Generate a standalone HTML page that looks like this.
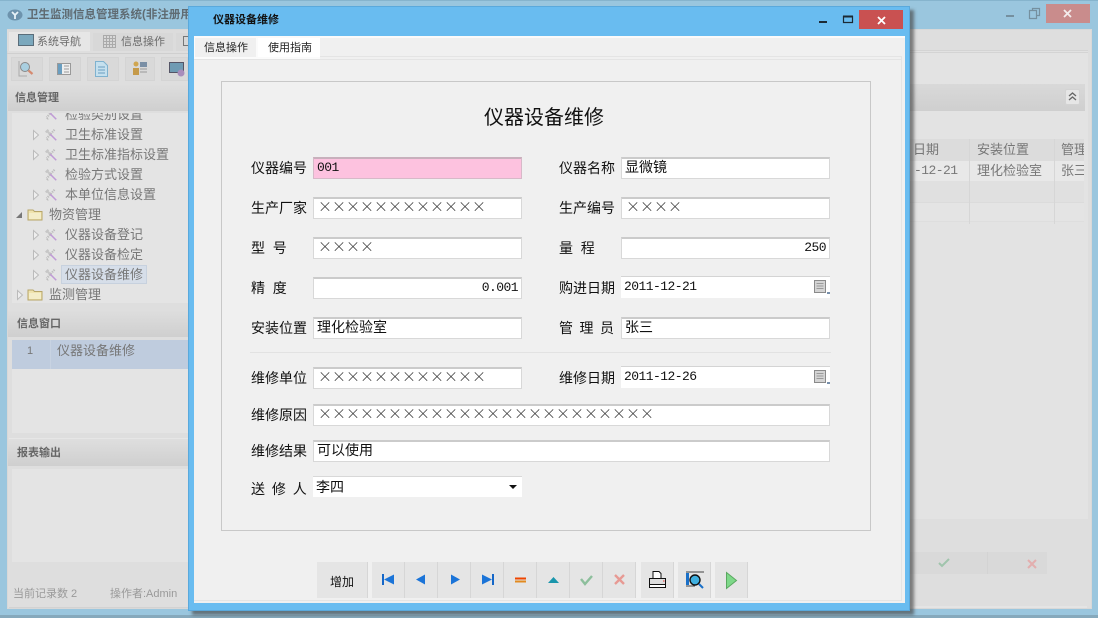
<!DOCTYPE html>
<html lang="zh-CN"><head><meta charset="utf-8">
<style>
html,body{margin:0;padding:0}
body{width:1098px;height:618px;overflow:hidden;position:relative;background:#9ac6de;font-family:"Liberation Sans","WenQuanYi Zen Hei","Noto Sans CJK SC",sans-serif;color:#000}
div,span,svg{position:absolute;display:block;box-sizing:border-box}
svg{overflow:visible}
.t{white-space:nowrap;line-height:20px}
.g{color:#777;font-size:13px}
.h{background:linear-gradient(#dedede,#cfcfcf);color:#666;font-weight:bold;font-size:11px;line-height:28px;padding-left:4px}
.tb{background:#d9d9d9;border:1px solid #d4d4d4;width:32px;height:24px;top:57px}
.l{font-size:14px;line-height:20px;white-space:pre;color:#111}
.i{background:#fff;border:1px solid #d8d8d8;border-top:2px solid #cbcbcb;height:22px;font-size:14px;line-height:17px;padding-left:3px;white-space:pre;color:#111}
.m{font-family:"Liberation Mono",monospace;font-size:13px;letter-spacing:-.55px;line-height:17px}
.x{font-family:"Noto Sans CJK SC",sans-serif;font-size:14px;font-weight:300;letter-spacing:0;color:#222;padding-left:4px;line-height:17px;overflow:hidden}
.b{background:#e5e5e5;border-right:1px solid #d6d6d6;top:562px;height:36px;width:33px}
.b svg{left:0;top:3px}
</style></head><body>
<svg width="0" height="0" style="left:0;top:0"><defs>
<symbol id="tool" viewBox="0 0 16 16"><path d="M3 3l4 4M5 2L2 5" stroke="#c6c6c6" stroke-width="2.400" fill="none"/><path d="M12 2L3 12" stroke="#bdbdbd" stroke-width="2.400" stroke-dasharray="1.500 1"/><path d="M7 7l7 7" stroke="#c09bd6" stroke-width="1.800"/><path d="M3 13l2 1" stroke="#aaa"/></symbol>
<symbol id="folder" viewBox="0 0 16 14"><path d="M1 3h5l1.500 1.500H15V13H1z" fill="#efe3ae" stroke="#b7a669"/><path d="M2 6h12v6H2z" fill="#f4edc8"/></symbol>
</defs></svg>

<!-- back window -->
<div style="left:0;top:0;width:1098px;height:1px;background:#86b4cd"></div>
<div style="left:0;top:615px;width:1098px;height:3px;background:#86a9bc"></div>
<svg width="16" height="12" style="left:7px;top:9px"><ellipse cx="8" cy="6" rx="7.500" ry="5.500" fill="#6d93ad"/><path d="M5 3l3 3 3-3M8 6v4" stroke="#e8f2f8" stroke-width="1.800" fill="none"/></svg>
<div class="t" style="left:27px;top:5px;font-size:11.500px;font-weight:bold;color:#5f6b72">卫生监测信息管理系统(非注册用户)</div>
<svg width="100" height="20" style="left:1000px;top:6px"><path d="M6 10h8" stroke="#75909f" stroke-width="2"/><path d="M29.500 4.500h7v8h-7zM32.500 4.500V2.500h7v7h-3" fill="none" stroke="#75909f" stroke-width="1.200"/></svg>
<div style="left:1046px;top:4px;width:44px;height:19px;background:#c98c8c"></div>
<svg width="10" height="10" style="left:1063px;top:9px"><path d="M1 1l7 7M8 1L1 8" stroke="#f4ecec" stroke-width="1.800"/></svg>

<div style="left:7px;top:29px;width:1085px;height:580px;background:#dedede;border:1px solid #d8d8d8"></div>
<div style="left:7px;top:30px;width:181px;height:21px;background:#dcdcdc"></div>
<div style="left:9px;top:32px;width:81px;height:19px;background:#e6e6e6"></div>
<div style="left:93px;top:33px;width:80px;height:18px;background:#d8d8d8"></div>
<svg width="16" height="13" style="left:18px;top:34px"><rect x=".5" y=".5" width="15" height="11" fill="#7ba8bd" stroke="#5a6d7a"/></svg>
<div class="t" style="left:37px;top:32px;font-size:11px;color:#6b6b6b">系统导航</div>
<div style="left:103px;top:35px;width:13px;height:13px;background:repeating-linear-gradient(90deg,#aaa 0 1px,transparent 1px 3px),repeating-linear-gradient(#aaa 0 1px,transparent 1px 3px)"></div>
<div class="t" style="left:121px;top:32px;font-size:11px;color:#6b6b6b">信息操作</div>
<div style="left:176px;top:33px;width:12px;height:18px;background:#d8d8d8"></div>
<div style="left:183px;top:36px;width:5px;height:10px;border:1px solid #777;border-right:0"></div>
<div style="left:7px;top:53px;width:181px;height:1px;background:#cfcfcf"></div>

<div class="tb" style="left:11px"></div><div class="tb" style="left:49px"></div><div class="tb" style="left:87px"></div><div class="tb" style="left:125px;width:30px"></div><div class="tb" style="left:161px;width:27px"></div>
<svg width="16" height="18" style="left:18px;top:60px"><circle cx="7" cy="7" r="4.500" fill="#a9cfe0" stroke="#888"/><path d="M10.500 10.500l4 3.500" stroke="#d58a70" stroke-width="2.200"/><path d="M1 1v15h8" stroke="#aaa" fill="none"/></svg>
<svg width="14" height="12" style="left:57px;top:63px"><rect x=".5" y=".5" width="13" height="11" fill="#eee" stroke="#999"/><rect x="1" y="1" width="4" height="10" fill="#6a9ec0"/><path d="M7 3h5M7 6h5M7 9h5" stroke="#999"/></svg>
<svg width="13" height="16" style="left:95px;top:61px"><path d="M.5.5h8l4 4v11H.5z" fill="#c5e0ee" stroke="#7fb2cf"/><path d="M3 6h7M3 9h7M3 12h7" stroke="#6a9ec0"/></svg>
<svg width="16" height="16" style="left:132px;top:60px"><circle cx="4" cy="4" r="2.500" fill="#d0a650"/><path d="M1 8h6v7H1z" fill="#c59a4a"/><rect x="8" y="2" width="7" height="5" fill="#7a8fa5"/><path d="M8 9h7M8 12h7" stroke="#999"/></svg>
<svg width="16" height="15" style="left:169px;top:62px"><rect x=".5" y=".5" width="14" height="10" fill="#6f9bb3" stroke="#556"/><circle cx="12" cy="11" r="3.500" fill="#a88dbb"/></svg>

<div class="h" style="left:8px;top:84px;width:180px;padding-left:7px;height:27px">信息管理</div>
<div style="left:12px;top:113px;width:176px;height:190px;background:#e4e4e4;overflow:hidden"><div style="left:0;top:-2px;width:176px;height:192px">
<div class="t g" style="left:53px;top:-6px">检验类别设置</div><svg width="14" height="14" style="left:32px;top:-4px"><use href="#tool"/></svg>
<svg width="6" height="10" style="left:21px;top:19px"><path d="M.5.5l5 4.500-5 4.500z" fill="#eee" stroke="#bbb"/></svg><svg width="14" height="14" style="left:32px;top:17px"><use href="#tool"/></svg><div class="t g" style="left:53px;top:14px">卫生标准设置</div>
<svg width="6" height="10" style="left:21px;top:39px"><path d="M.5.5l5 4.500-5 4.500z" fill="#eee" stroke="#bbb"/></svg><svg width="14" height="14" style="left:32px;top:37px"><use href="#tool"/></svg><div class="t g" style="left:53px;top:34px">卫生标准指标设置</div>
<svg width="14" height="14" style="left:32px;top:57px"><use href="#tool"/></svg><div class="t g" style="left:53px;top:54px">检验方式设置</div>
<svg width="6" height="10" style="left:21px;top:79px"><path d="M.5.5l5 4.500-5 4.500z" fill="#eee" stroke="#bbb"/></svg><svg width="14" height="14" style="left:32px;top:77px"><use href="#tool"/></svg><div class="t g" style="left:53px;top:74px">本单位信息设置</div>
<svg width="7" height="7" style="left:4px;top:101px"><path d="M6 0v6H0z" fill="#777"/></svg><svg width="16" height="14" style="left:15px;top:96px"><use href="#folder"/></svg><div class="t g" style="left:37px;top:94px">物资管理</div>
<svg width="6" height="10" style="left:21px;top:119px"><path d="M.5.5l5 4.500-5 4.500z" fill="#eee" stroke="#bbb"/></svg><svg width="14" height="14" style="left:32px;top:117px"><use href="#tool"/></svg><div class="t g" style="left:53px;top:114px">仪器设备登记</div>
<svg width="6" height="10" style="left:21px;top:139px"><path d="M.5.5l5 4.500-5 4.500z" fill="#eee" stroke="#bbb"/></svg><svg width="14" height="14" style="left:32px;top:137px"><use href="#tool"/></svg><div class="t g" style="left:53px;top:134px">仪器设备检定</div>
<svg width="6" height="10" style="left:21px;top:159px"><path d="M.5.5l5 4.500-5 4.500z" fill="#eee" stroke="#bbb"/></svg><svg width="14" height="14" style="left:32px;top:157px"><use href="#tool"/></svg>
<div style="left:49px;top:154px;width:86px;height:19px;background:#d6dee9;border:1px solid #c7d1de"></div><div class="t g" style="left:53px;top:154px">仪器设备维修</div>
<svg width="6" height="10" style="left:5px;top:179px"><path d="M.5.5l5 4.500-5 4.500z" fill="#eee" stroke="#bbb"/></svg><svg width="16" height="14" style="left:15px;top:176px"><use href="#folder"/></svg><div class="t g" style="left:37px;top:174px">监测管理</div>
</div></div>

<div class="h" style="left:8px;top:310px;width:180px;padding-left:9px;height:27px">信息窗口</div>
<div style="left:12px;top:340px;width:176px;height:93px;background:#e4e4e4"></div>
<div style="left:12px;top:340px;width:176px;height:29px;background:#bfccde"></div>
<div style="left:50px;top:340px;width:1px;height:29px;background:#c8d3e2"></div>
<div class="t" style="left:27px;top:341px;font-size:11px;color:#777">1</div>
<div class="t g" style="left:57px;top:341px">仪器设备维修</div>
<div style="left:9px;top:438px;width:179px;height:1px;background:#e6e6e6"></div>
<div class="h" style="left:8px;top:439px;width:180px;padding-left:9px;height:27px">报表输出</div>
<div style="left:12px;top:469px;width:176px;height:93px;background:#e4e4e4"></div>
<div class="t" style="left:13px;top:584px;font-size:11px;color:#999">当前记录数 2</div>
<div class="t" style="left:110px;top:584px;font-size:11px;color:#999">操作者:Admin</div>
<div style="left:9px;top:607px;width:179px;height:1px;background:#d2d2d2"></div>

<!-- right of back window -->
<div style="left:910px;top:50px;width:178px;height:3px;border-top:1px solid #d4d4d4;border-bottom:1px solid #d4d4d4;background:#e2e2e2"></div>
<div style="left:910px;top:53px;width:178px;height:466px;background:#e3e3e3"></div>
<div style="left:910px;top:84px;width:175px;height:27px;background:linear-gradient(#d9d9d9,#cfcfcf)"></div>
<div style="left:1065px;top:89px;width:15px;height:16px;background:#e6e6e6;border:1px solid #d3d3d3;border-radius:2px"></div>
<svg width="9" height="9" style="left:1068px;top:92px"><path d="M1 4l3.500-3L8 4M1 8l3.500-3L8 8" fill="none" stroke="#666" stroke-width="1.300"/></svg>
<div style="left:910px;top:139px;width:174px;height:22px;background:#dcdcdc"></div>
<div style="left:910px;top:161px;width:174px;height:20px;background:#e8e8e8"></div>
<div style="left:910px;top:181px;width:174px;height:22px;background:#e0e0e0;border-bottom:1px solid #dbdbdb"></div>
<div style="left:910px;top:203px;width:174px;height:19px;background:#e4e4e4;border-bottom:1px solid #dedede"></div>
<div style="left:969px;top:139px;width:1px;height:85px;background:#d6d6d6"></div>
<div style="left:1054px;top:139px;width:1px;height:85px;background:#d6d6d6"></div>
<div class="t" style="left:913px;top:140px;font-size:13px;color:#777">日期</div>
<div class="t" style="left:977px;top:140px;font-size:13px;color:#777">安装位置</div>
<div class="t" style="left:1061px;top:140px;width:23px;overflow:hidden;font-size:13px;color:#777">管理</div>
<div class="t m" style="left:914px;top:161px;line-height:20px;color:#777">-12-21</div>
<div class="t" style="left:977px;top:161px;font-size:13px;color:#777">理化检验室</div>
<div class="t" style="left:1061px;top:161px;width:23px;overflow:hidden;font-size:13px;color:#777">张三</div>
<div style="left:910px;top:552px;width:137px;height:22px;background:#d9d9d9"></div>
<div style="left:987px;top:552px;width:1px;height:22px;background:#d3d3d3"></div>
<svg width="12" height="10" style="left:938px;top:558px"><path d="M1 5l3 3 7-7" fill="none" stroke="#a0c4ac" stroke-width="2"/></svg>
<svg width="10" height="10" style="left:1027px;top:559px"><path d="M1 1l8 8M9 1L1 9" stroke="#e3aeae" stroke-width="2"/></svg>
<div style="left:910px;top:606px;width:177px;height:2px;background:#e4e4e4"></div>

<!-- dialog -->
<div style="left:188px;top:6px;width:722px;height:605px;background:#69bcf0;border:1px solid #5aa9dc;box-shadow:4px 4px 3px rgba(70,70,70,.65)"></div>
<div class="t" style="left:213px;top:10px;font-size:11px;font-weight:bold;color:#111">仪器设备维修</div>
<svg width="60" height="14" style="left:812px;top:14px"><path d="M7 8h8" stroke="#1c2a35" stroke-width="2"/><path d="M31.500 2.500h9v6h-9z" fill="none" stroke="#1c2a35" stroke-width="1.200"/><path d="M31 2.500h10" stroke="#1c2a35" stroke-width="2"/></svg>
<div style="left:859px;top:10px;width:44px;height:19px;background:#c95151"></div>
<svg width="10" height="10" style="left:877px;top:16px"><path d="M1 1l7 7M8 1L1 8" stroke="#fff" stroke-width="1.800"/></svg>

<div style="left:194px;top:36px;width:711px;height:567px;background:#f0f0f0"></div>
<div style="left:194px;top:36px;width:711px;height:2px;background:#fafafa"></div>
<div style="left:194px;top:38px;width:126px;height:21px;background:#fbfbfb"></div>
<div style="left:195px;top:38px;width:61px;height:19px;background:#f0f0f0"></div>
<div style="left:258px;top:38px;width:62px;height:19px;background:#fff"></div>
<div class="t" style="left:204px;top:38px;font-size:11px;color:#222">信息操作</div>
<div class="t" style="left:268px;top:38px;font-size:11px;color:#222">使用指南</div>
<div style="left:320px;top:56px;width:582px;height:1px;background:#e4e4e4"></div>
<div style="left:194px;top:59px;width:708px;height:542px;border:1px solid #e4e4e4;border-left:0"></div>
<div style="left:901px;top:56px;width:1px;height:4px;background:#e4e4e4"></div>

<div style="left:221px;top:81px;width:650px;height:450px;border:1px solid #c8c8c8"></div>
<div class="t" style="left:484px;top:108px;font-size:20px;color:#111">仪器设备维修</div>

<div class="l" style="left:251px;top:158px">仪器编号</div>
<div class="i m" style="left:313px;top:157px;width:209px;background:#fdc2df;border-color:#d7b9c8;border-top-color:#c8b0bc">001</div>
<div class="l" style="left:559px;top:158px">仪器名称</div>
<div class="i" style="left:621px;top:157px;width:209px">显微镜</div>

<div class="l" style="left:251px;top:198px">生产厂家</div>
<div class="i x" style="left:313px;top:197px;width:209px">××××××××××××</div>
<div class="l" style="left:559px;top:198px">生产编号</div>
<div class="i x" style="left:621px;top:197px;width:209px">××××</div>

<div class="l" style="left:251px;top:238px">型  号</div>
<div class="i x" style="left:313px;top:237px;width:209px">××××</div>
<div class="l" style="left:559px;top:238px">量  程</div>
<div class="i m" style="left:621px;top:237px;width:209px;text-align:right;padding-right:3px">250</div>

<div class="l" style="left:251px;top:278px">精  度</div>
<div class="i m" style="left:313px;top:277px;width:209px;text-align:right;padding-right:3px">0.001</div>
<div class="l" style="left:559px;top:278px">购进日期</div>
<div class="i m" style="left:621px;top:276px;width:209px;border:0;border-top:1px solid #d4d4d4;line-height:20px">2011-12-21</div>
<svg width="15" height="15" style="left:814px;top:280px"><rect x=".5" y=".5" width="11" height="12" fill="#d4d4d4" stroke="#8a8a8a"/><path d="M2.500 3.500h7M2.500 6h7M2.500 8.500h7" stroke="#9a9a9a"/><path d="M13 13h3" stroke="#4a6a90" stroke-width="1.500"/></svg>

<div class="l" style="left:251px;top:318px">安装位置</div>
<div class="i" style="left:313px;top:317px;width:209px">理化检验室</div>
<div class="l" style="left:559px;top:318px;word-spacing:2.600px">管 理 员</div>
<div class="i" style="left:621px;top:317px;width:209px">张三</div>

<div style="left:250px;top:352px;width:581px;height:1px;background:#e2e2e2"></div>

<div class="l" style="left:251px;top:368px">维修单位</div>
<div class="i x" style="left:313px;top:367px;width:209px">××××××××××××</div>
<div class="l" style="left:559px;top:368px">维修日期</div>
<div class="i m" style="left:621px;top:366px;width:209px;border:0;border-top:1px solid #d4d4d4;line-height:20px">2011-12-26</div>
<svg width="15" height="15" style="left:814px;top:370px"><rect x=".5" y=".5" width="11" height="12" fill="#d4d4d4" stroke="#8a8a8a"/><path d="M2.500 3.500h7M2.500 6h7M2.500 8.500h7" stroke="#9a9a9a"/><path d="M13 13h3" stroke="#4a6a90" stroke-width="1.500"/></svg>

<div class="l" style="left:251px;top:405px">维修原因</div>
<div class="i x" style="left:313px;top:404px;width:517px">××××××××××××××××××××××××</div>
<div class="l" style="left:251px;top:441px">维修结果</div>
<div class="i" style="left:313px;top:440px;width:517px">可以使用</div>
<div class="l" style="left:251px;top:479px;word-spacing:3px">送 修 人</div>
<div style="left:313px;top:476px;width:209px;height:21px;background:#fff;border-top:1px solid #d8d8d8;font-size:14px;line-height:20px;padding-left:3px;color:#111">李四</div>
<svg width="8" height="5" style="left:509px;top:485px"><path d="M0 0h8L4 4z" fill="#111"/></svg>

<!-- toolbar -->
<div style="left:317px;top:562px;width:51px;height:36px;background:#e5e5e5;border-right:1px solid #d6d6d6;font-size:12px;line-height:40px;text-align:center;color:#111">增加</div>
<div class="b" style="left:372px"><svg width="33" height="36"><path d="M11 9v11" stroke="#1567c8" stroke-width="2"/><path d="M12 14.500l10-5v10z" fill="#1b74d8"/></svg></div>
<div class="b" style="left:405px"><svg width="33" height="36"><path d="M11 14.500l9-5v10z" fill="#1b74d8"/></svg></div>
<div class="b" style="left:438px"><svg width="33" height="36"><path d="M22 14.500l-9-5v10z" fill="#1b74d8"/></svg></div>
<div class="b" style="left:471px"><svg width="33" height="36"><path d="M22 9v11" stroke="#1567c8" stroke-width="2"/><path d="M21 14.500l-10-5v10z" fill="#1b74d8"/></svg></div>
<div class="b" style="left:504px"><svg width="33" height="36"><path d="M11 12.500h11v2H11z" fill="#ee4500"/><path d="M11 15.500h11v2H11z" fill="#e28a20"/></svg></div>
<div class="b" style="left:537px"><svg width="33" height="36"><path d="M11 18l5.500-6 5.500 6z" fill="#1a96ac"/></svg></div>
<div class="b" style="left:570px"><svg width="33" height="36"><path d="M11 14l4 5 7-8" fill="none" stroke="#8dbf9c" stroke-width="2.400"/></svg></div>
<div class="b" style="left:603px"><svg width="33" height="36"><path d="M12 10l9 9M21 10l-9 9" stroke="#e79a94" stroke-width="2.400"/></svg></div>
<div class="b" style="left:641px"><svg width="33" height="36" style="top:5px"><path d="M12 4.500h6l2 2v5h-8z" fill="#fff" stroke="#111"/><path d="M8.500 11.500h16v6h-16z" fill="#ddd" stroke="#111"/><path d="M8.500 17.500h16v3h-16z" fill="#fff" stroke="#111"/><path d="M22 14h1.500" stroke="#e33"/></svg></div>
<div class="b" style="left:678px"><svg width="33" height="36" style="top:4px"><path d="M8 6h18" stroke="#444"/><rect x="8" y="7" width="3" height="12" fill="#1a70c8"/><circle cx="17" cy="14" r="5" fill="#3fb0e0" stroke="#111" stroke-width="1.400"/><path d="M21 18l4 4" stroke="#1a70c8" stroke-width="2"/><path d="M8 20h9" stroke="#444"/></svg></div>
<div class="b" style="left:715px"><svg width="33" height="36"><path d="M11.500 7.500l10 8-10 8z" fill="#7ed889" stroke="#5aa860"/></svg></div>
</body></html>
